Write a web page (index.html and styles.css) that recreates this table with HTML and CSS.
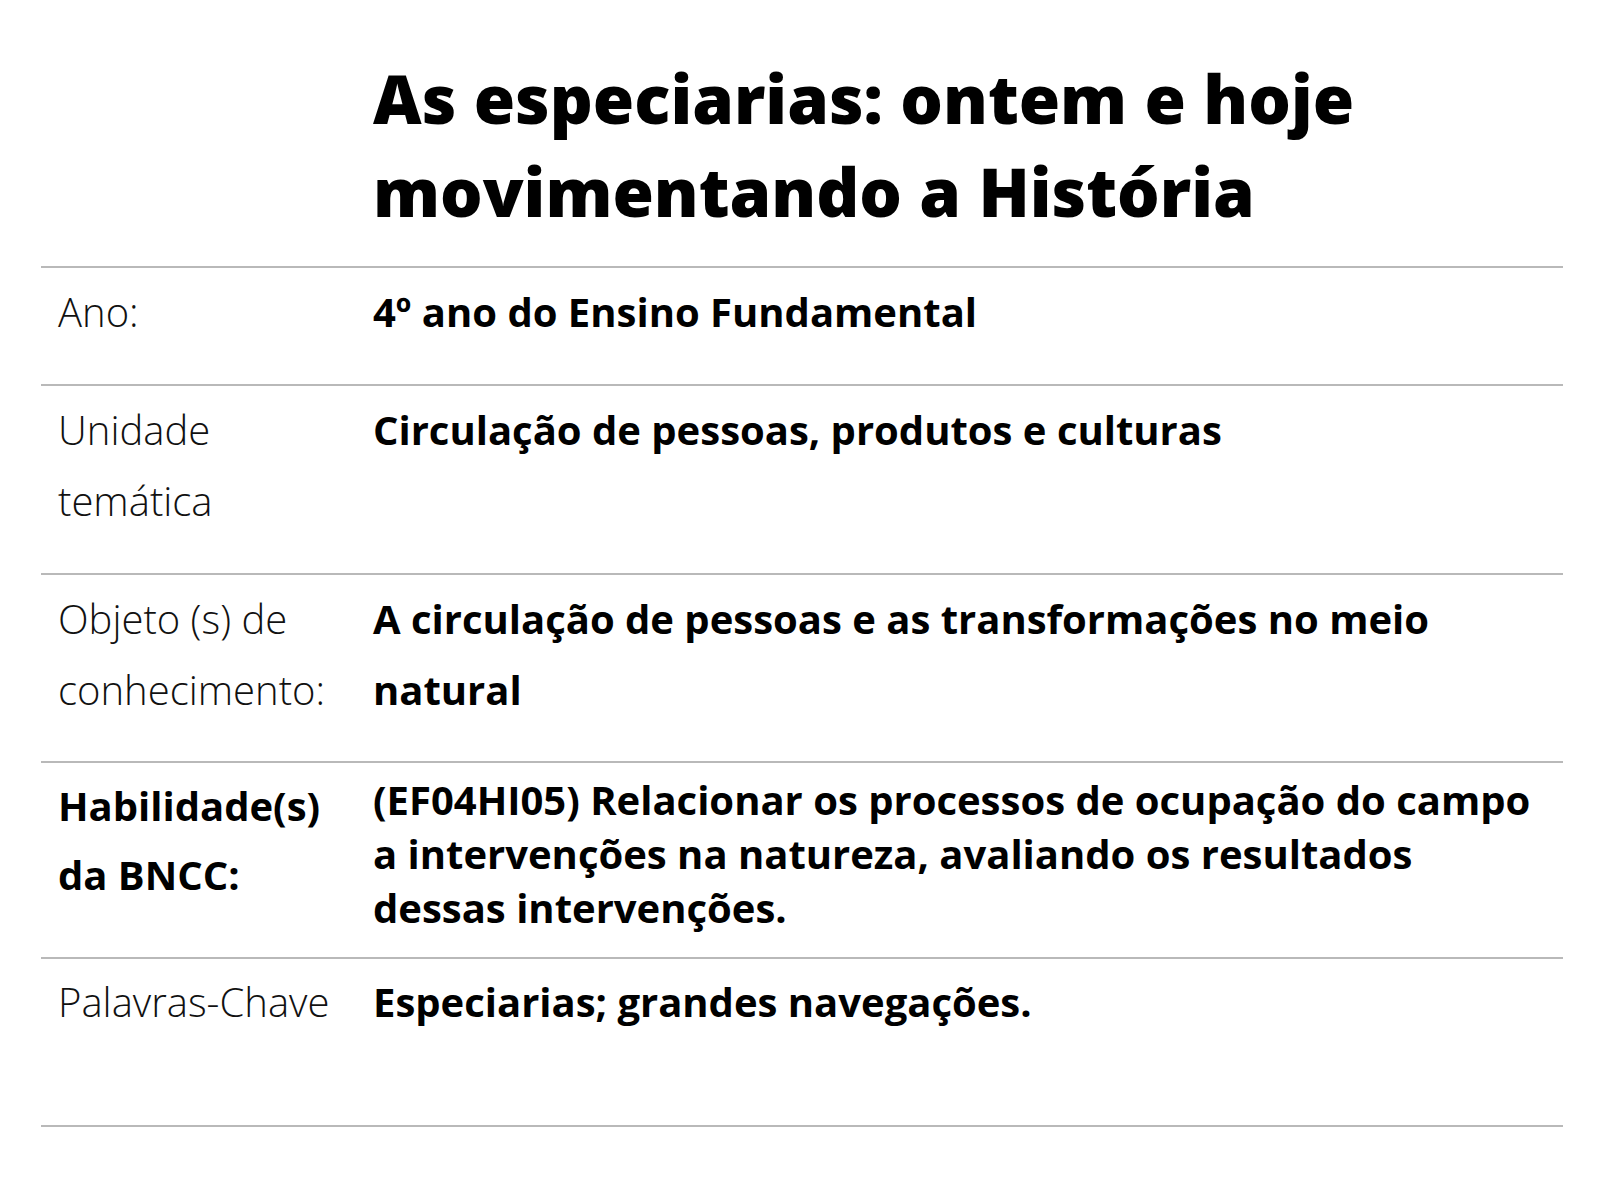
FILE: index.html
```html
<!DOCTYPE html>
<html lang="pt">
<head>
<meta charset="utf-8">
<title>As especiarias</title>
<link rel="stylesheet" href="styles.css">
</head>
<body>
<main class="sheet">
  <header class="head">
    <div class="head-spacer"></div>
    <h1 class="title">As especiarias: ontem e hoje movimentando a História</h1>
  </header>
  <section class="table">
    <div class="row">
      <div class="label">Ano:</div>
      <div class="value">4º ano do Ensino Fundamental</div>
    </div>
    <div class="row">
      <div class="label">Unidade temática</div>
      <div class="value">Circulação de pessoas, produtos e culturas</div>
    </div>
    <div class="row row-object">
      <div class="label">Objeto (s) de conhecimento:</div>
      <div class="value">A circulação de pessoas e as transformações no meio natural</div>
    </div>
    <div class="row row-skill">
      <div class="label label-bold">Habilidade(s) da BNCC:</div>
      <div class="value value-tight">(EF04HI05) Relacionar os processos de ocupação do campo a intervenções na natureza, avaliando os resultados dessas intervenções.</div>
    </div>
    <div class="row row-last">
      <div class="label">Palavras-Chave</div>
      <div class="value">Especiarias; grandes navegações.</div>
    </div>
  </section>
</main>
</body>
</html>
```

FILE: styles.css
```css
* { box-sizing: border-box; }
html, body { margin: 0; padding: 0; background: #ffffff; }
body {
  font-family: "Open Sans", "Noto Sans", "Liberation Sans", sans-serif;
  color: #000;
}
.sheet {
  width: 1522px;
  margin-left: 41px;
}
.head {
  display: grid;
  grid-template-columns: 332px 1fr;
  padding-top: 52px;
  padding-bottom: 28px;
}
.title {
  margin: 0;
  font-size: 67px;
  font-weight: 800;
  line-height: 93px;
}
.row {
  display: grid;
  grid-template-columns: 315px 1fr;
  border-top: 2px solid #b9b9b9;
  padding: 8px 18px 37px 17px;
}
.row-object { padding-bottom: 36px; }
.row-skill { padding-top: 8px; padding-bottom: 22px; }
.row-last {
  height: 170px;
  padding-top: 7px;
  border-bottom: 2px solid #b9b9b9;
}
.label {
  font-size: 40px;
  font-weight: 300;
  line-height: 71px;
  color: #111;
  padding-right: 22px;
}
.label-bold { font-weight: 700; line-height: 69px; color: #000; }
.value {
  font-size: 40px;
  font-weight: 700;
  line-height: 71px;
}
.value-tight { line-height: 54px; padding-top: 2px; }
```
